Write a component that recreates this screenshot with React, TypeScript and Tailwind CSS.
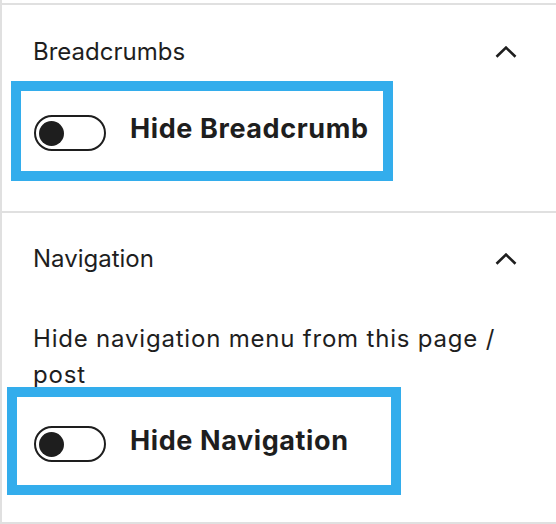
import React from "react";

function Chevron() {
  return (
    <svg width="22" height="12" viewBox="0 0 22 12" fill="none" className="shrink-0">
      <polyline points="1.5,10.8 11,1.6 20.5,10.8" stroke="#1e1e1e" strokeWidth="2.6" />
    </svg>
  );
}

function Toggle() {
  return (
    <div className="w-[72px] h-[36px] shrink-0 rounded-full border-2 border-[#1e1e1e] bg-white flex items-center pl-[3px]">
      <div className="w-[25px] h-[25px] rounded-full bg-[#1e1e1e]" />
    </div>
  );
}

function PanelHeader({ title, pt }: { title: string; pt: string }) {
  return (
    <div className={`flex items-center justify-between pl-[31px] pr-[39px] ${pt}`}>
      <span className="text-[24px] leading-[36px] text-[#1e1e1e]">{title}</span>
      <Chevron />
    </div>
  );
}

export default function App() {
  return (
    <div
      className="w-[556px] h-[524px] bg-white border-l-2 border-[#e0e0e0] overflow-hidden"
      style={{ fontFamily: "Inter, 'Noto Sans', sans-serif" }}
    >
      {/* Breadcrumbs panel */}
      <section className="mt-[3px] border-t-2 border-[#e0e0e0] h-[208px]">
        <PanelHeader title="Breadcrumbs" pt="pt-[29px]" />
        <div className="mt-[11px] ml-[9px] w-[382px] h-[100px] border-[10px] border-[#33adec] flex items-center gap-[24px] pl-[13px] pt-[4px]">
          <Toggle />
          <span className="mb-[8px] text-[27px] font-bold tracking-[0.6px] text-[#1e1e1e]">Hide Breadcrumb</span>
        </div>
      </section>

      {/* Navigation panel */}
      <section className="border-t-2 border-[#e0e0e0] h-[311px]">
        <PanelHeader title="Navigation" pt="pt-[28px]" />
        <p className="mt-[44px] pl-[31px] w-[500px] text-[24px] leading-[36px] tracking-[0.8px] text-[#1e1e1e]">
          Hide navigation menu from this page / post
        </p>
        <div className="relative -mt-[6px] ml-[5px] w-[394px] h-[108px] border-[10px] border-[#33adec] bg-white flex items-center gap-[24px] pl-[17px] pt-[6px]">
          <Toggle />
          <span className="mb-[6px] text-[27px] font-bold tracking-[0.6px] text-[#1e1e1e]">Hide Navigation</span>
        </div>
      </section>
      <div className="border-t-2 border-[#e0e0e0]" />
    </div>
  );
}
